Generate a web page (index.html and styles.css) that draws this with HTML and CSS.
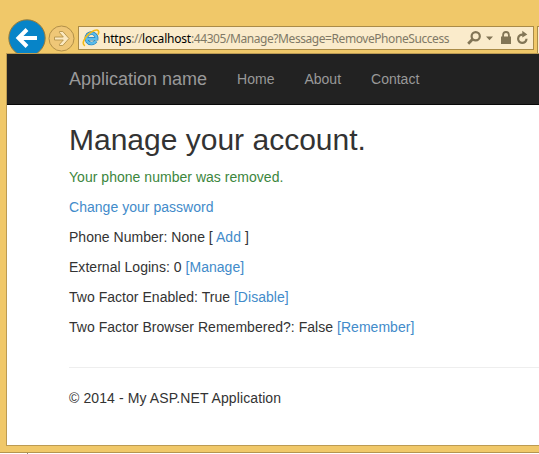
FILE: index.html
```html
<!DOCTYPE html>
<html lang="en">
<head>
<meta charset="utf-8">
<title>Manage your account</title>
<link rel="stylesheet" href="styles.css">
</head>
<body>
<div class="window">
  <header class="toolbar">
    <svg class="back" width="38" height="34" viewBox="0 0 38 34">
      <circle cx="19" cy="19" r="18.2" fill="#0784c8" stroke="#987c3a" stroke-width="1"/>
      <path d="M29 19H11M19 10.5L10.5 19l8.5 8.5" fill="none" stroke="#fff" stroke-width="4"/>
    </svg>
    <svg class="forward" width="27" height="27" viewBox="0 0 27 27">
      <circle cx="13.5" cy="13.5" r="12.5" fill="#efc777" stroke="#b18f48"/>
      <path d="M6.5 12h8.8l-3.8-4.3V6.5h3.3l6.2 7-6.2 7h-3.3v-1.2l3.8-4.3H6.5z" fill="#fbe8c0" stroke="#b39349" stroke-width=".9"/>
    </svg>
    <div class="address">
      <svg class="ie" width="18" height="18" viewBox="0 0 18 18">
        <path d="M13.8 12.1A5.2 5.2 0 1 1 14.6 9.8H5.5" fill="none" stroke="#207fb9" stroke-width="3.6"/>
        <path d="M13.8 12.1A5.2 5.2 0 1 1 14.6 9.8H5.5" fill="none" stroke="#5bbceb" stroke-width="2.3"/>
        <path d="M3 16.7C-.4 15.4 1.5 9.7 6 5.6 10.2 1.8 15.1-.3 16.4 2c.6 1 .2 2.4-.5 3.6" fill="none" stroke="#f2ba16" stroke-width="1.6"/>
      </svg>
      <div class="url"><span>https</span>://<span>localhost</span>:44305/Manage?Message=RemovePhoneSuccess</div>
      <svg class="tools" width="64" height="16" viewBox="0 0 64 16">
        <g fill="none" stroke="#827556" stroke-width="2.2">
          <circle cx="8.7" cy="6.2" r="4.1"/>
          <path d="M5.8 9.1L1.2 13.7" stroke-width="2.8"/>
          <path d="M36.1 7V4.9a2.9 2.9 0 0 1 5.8 0V7" stroke-width="1.8"/>
          <path d="M56 4.6A4.2 4.2 0 1 0 59.5 8.8"/>
        </g>
        <path d="M19 6.5h7l-3.5 3.7zM34 6.5h10V14H34zM55.3.8L60.3 4.6 55.3 7.4z" fill="#827556"/>
      </svg>
    </div>
    <div class="tab"></div>
  </header>
  <main class="page">
    <nav class="navbar">
      <a class="brand">Application name</a>
      <a>Home</a>
      <a>About</a>
      <a>Contact</a>
    </nav>
    <section class="content">
      <h1>Manage your account.</h1>
      <p class="success">Your phone number was removed.</p>
      <p><a>Change your password</a></p>
      <p>Phone Number: None [ <a>Add</a> ]</p>
      <p>External Logins: 0 <a>[Manage]</a></p>
      <p>Two Factor Enabled: True <a>[Disable]</a></p>
      <p>Two Factor Browser Remembered?: False <a>[Remember]</a></p>
      <hr>
      <footer>© 2014 - My ASP.NET Application</footer>
    </section>
  </main>
  <div class="frame-bottom"></div>
</div>
<div class="below"><i></i></div>
</body>
</html>
```
FILE: styles.css
```css
* { box-sizing: border-box; }
body {
  margin: 0;
  height: 454px;
  overflow: hidden;
  background: #fff;
  font: 14px/20px "Liberation Sans", Arial, sans-serif;
  color: #333;
}
.window { height: 453px; background: #f0c869; border-bottom: 1px solid #b5954f; }
.toolbar { display: flex; height: 53px; padding-left: 8px; }
.back { margin-top: 19px; flex: none; }
.forward { margin: 25px 0 0 2px; flex: none; }
.address {
  display: flex;
  align-items: center;
  flex: none;
  width: 456px;
  height: 24px;
  margin: 26px 0 0 3px;
  padding-left: 3px;
  border: 1px solid #aa8b47;
  background: #faebcb;
}
.ie { flex: none; }
.url {
  width: 364px;
  margin: 2px 0 0 3px;
  font: 12px/20px "Noto Sans", "Open Sans", sans-serif;
  letter-spacing: -.43px;
  white-space: nowrap;
  color: #807966;
}
.url span { color: #000; letter-spacing: -.2px; }
.tools { flex: none; }
.tab {
  flex: none;
  width: 5px;
  height: 27px;
  margin: 26px 0 0 3px;
  border: 1px solid #aa8b47;
  border-bottom: 0;
  background: #faebcb;
}
.page {
  height: 393px;
  margin-left: 6px;
  border: 1px solid #bc9b52;
  border-right: 0;
  background: #fff;
}
.navbar {
  display: flex;
  gap: 30px;
  height: 51px;
  padding: 15px 0 0 62px;
  background: #222;
  border-bottom: 1px solid #080808;
  color: #999;
}
.brand { font-size: 18px; }
.content { padding: 15px 0 0 62px; }
h1 { margin: 0 0 7px; font-size: 30px; line-height: 40px; font-weight: 500; }
p { margin: 0 0 10px; letter-spacing: .03px; }
p a { color: #428bca; }
.success { color: #3c863d; }
hr { margin: 30px 0 20px; border: 0; border-top: 1px solid #eee; }
footer { letter-spacing: .1px; }
.below { height: 1px; padding-left: 27px; background: #fff; }
.below i { display: block; width: 1px; height: 1px; background: #8d8a80; }
```
